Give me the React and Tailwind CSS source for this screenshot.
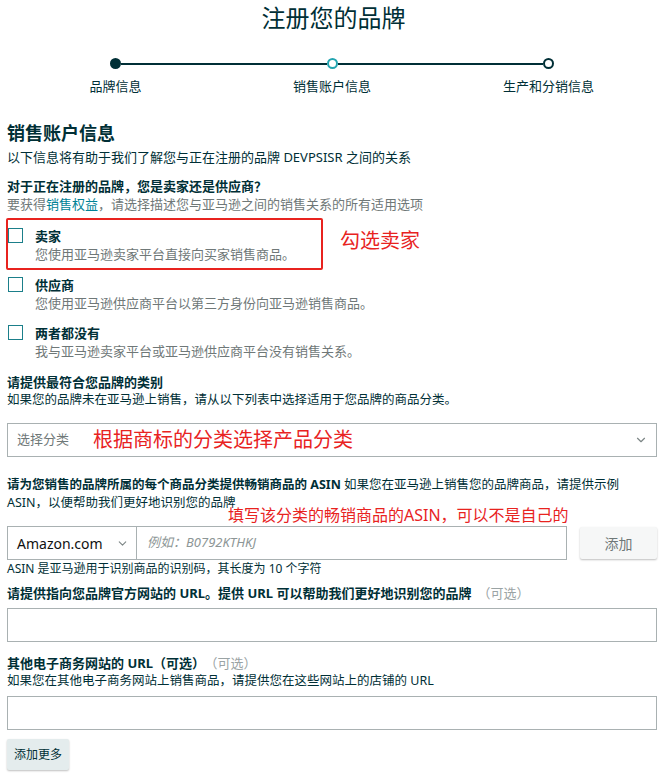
import React from 'react';
import { ChevronDown } from 'lucide-react';

function Checkbox() {
  return <span className="ml-[1px] mt-[1px] block h-[15px] w-[15px] shrink-0 border border-[#1b7f8a] bg-white" />;
}

function Option({ title, desc, className = '', children }) {
  return (
    <div className={`relative flex gap-[12px] ${className}`}>
      <Checkbox />
      <div>
        <div className="text-[13px] font-bold leading-[18px] text-[#002f36]">{title}</div>
        <div className="text-[13px] leading-[18px] text-[#6f7878]">{desc}</div>
      </div>
      {children}
    </div>
  );
}

export default function App() {
  return (
    <div className="min-h-[778px] w-[667px] bg-white pl-[7px] pr-[10px] pb-[10px] font-['Noto_Sans','Noto_Sans_CJK_SC',sans-serif] text-[#002f36]">
      <h1 className="pt-[3px] pl-[3px] text-center text-[24px] font-normal leading-[30px] text-[#002f36]">注册您的品牌</h1>

      {/* stepper */}
      <div className="ml-[103px] mt-[25px] w-[444px]">
        <div className="flex items-center">
          <span className="h-[11px] w-[11px] shrink-0 rounded-full bg-[#002f36]" />
          <span className="h-[2px] flex-1 bg-[#002f36]" />
          <span className="h-[11px] w-[11px] shrink-0 rounded-full border-2 border-[#22a4b0] bg-white" />
          <span className="h-[2px] flex-1 bg-[#002f36]" />
          <span className="h-[11px] w-[11px] shrink-0 rounded-full border-2 border-[#002f36] bg-white" />
        </div>
        <div className="mt-[8px] flex justify-between text-[13px] leading-[18px]">
          <span className="flex w-[11px] justify-center whitespace-nowrap">品牌信息</span>
          <span className="flex w-[11px] justify-center whitespace-nowrap">销售账户信息</span>
          <span className="flex w-[11px] justify-center whitespace-nowrap">生产和分销信息</span>
        </div>
      </div>

      <h2 className="mt-[26px] text-[18px] font-bold leading-[24px]">销售账户信息</h2>
      <p className="mt-[3px] text-[13px] leading-[18px]">以下信息将有助于我们了解您与正在注册的品牌 DEVPSISR 之间的关系</p>

      <p className="mt-[11px] text-[13px] font-bold leading-[18px]">对于正在注册的品牌，您是卖家还是供应商？</p>
      <p className="text-[13px] leading-[18px] text-[#6f7878]">
        要获得<span className="text-[#008296]">销售权益</span>，请选择描述您与亚马逊之间的销售关系的所有适用选项
      </p>

      <Option className="mt-[14px]" title="卖家" desc="您使用亚马逊卖家平台直接向买家销售商品。">
        <div className="pointer-events-none absolute left-[-1px] top-[-9px] h-[52px] w-[317px] rounded-[2px] border-2 border-[#e8231f]" />
        <div className="absolute left-[333px] top-[2px] whitespace-nowrap text-[20px] leading-[24px] text-[#e8231f]">勾选卖家</div>
      </Option>
      <Option className="mt-[13px]" title="供应商" desc="您使用亚马逊供应商平台以第三方身份向亚马逊销售商品。" />
      <Option className="mt-[12px]" title="两者都没有" desc="我与亚马逊卖家平台或亚马逊供应商平台没有销售关系。" />

      <p className="mt-[13px] text-[13px] font-bold leading-[18px]">请提供最符合您品牌的类别</p>
      <p className="text-[12.5px] leading-[18px]">如果您的品牌未在亚马逊上销售，请从以下列表中选择适用于您品牌的商品分类。</p>

      <div className="mt-[14px] flex h-[34px] items-center border border-[#a9b1b2] pl-[9px] pr-[8px]">
        <span className="text-[13px] text-[#6f7878]">选择分类</span>
        <span className="ml-[24px] text-[20px] leading-[24px] text-[#e8231f]">根据商标的分类选择产品分类</span>
        <ChevronDown className="ml-auto h-[14px] w-[14px] text-[#7d8686]" strokeWidth={2} />
      </div>

      <p className="mt-[19px] text-[12.5px] leading-[18px]">
        <span className="font-bold">请为您销售的品牌所属的每个商品分类提供畅销商品的 ASIN</span> 如果您在亚马逊上销售您的品牌商品，请提供示例 ASIN，以便帮助我们更好地识别您的品牌
      </p>

      <div className="relative mt-[14px] flex items-center">
        <div className="absolute left-[221px] top-[-21px] whitespace-nowrap text-[16px] leading-[20px] text-[#e8231f]">填写该分类的畅销商品的ASIN，可以不是自己的</div>
        <div className="flex h-[34px] w-[130px] items-center border border-[#a9b1b2] pl-[9px] pr-[7px]">
          <span className="text-[14px] text-[#0f1111]">Amazon.com</span>
          <ChevronDown className="ml-auto h-[13px] w-[13px] text-[#7d8686]" strokeWidth={2} />
        </div>
        <div className="flex h-[34px] flex-1 items-center border-y border-r border-[#a9b1b2] pl-[10px]">
          <span className="text-[13px] italic text-[#8d9696]">例如：B0792KTHKJ</span>
        </div>
        <button className="ml-[13px] h-[32px] w-[77px] rounded-[2px] bg-[#f6f7f7] text-[14px] text-[#6f7878] shadow-[0_1px_2px_rgba(0,0,0,0.25)]">添加</button>
      </div>
      <p className="text-[12px] leading-[18px]">ASIN 是亚马逊用于识别商品的识别码，其长度为 10 个字符</p>

      <p className="mt-[6px] text-[13px] leading-[18px]">
        <span className="font-bold">请提供指向您品牌官方网站的 URL。提供 URL 可以帮助我们更好地识别您的品牌</span>
        <span className="ml-[6px] text-[#9aa3a4]">（可选）</span>
      </p>
      <div className="mt-[6px] h-[34px] border border-[#a9b1b2]" />

      <p className="mt-[12px] text-[13px] leading-[18px]">
        <span className="font-bold">其他电子商务网站的 URL（可选）</span>
        <span className="ml-[6px] text-[#9aa3a4]">（可选）</span>
      </p>
      <p className="text-[12.5px] leading-[18px]">如果您在其他电子商务网站上销售商品，请提供您在这些网站上的店铺的 URL</p>
      <div className="mt-[6px] h-[34px] border border-[#a9b1b2]" />

      <button className="mt-[9px] h-[31px] w-[62px] rounded-[2px] bg-[#e4eced] text-[12px] text-[#002f36] shadow-[0_1px_2px_rgba(0,0,0,0.25)]">添加更多</button>
    </div>
  );
}
